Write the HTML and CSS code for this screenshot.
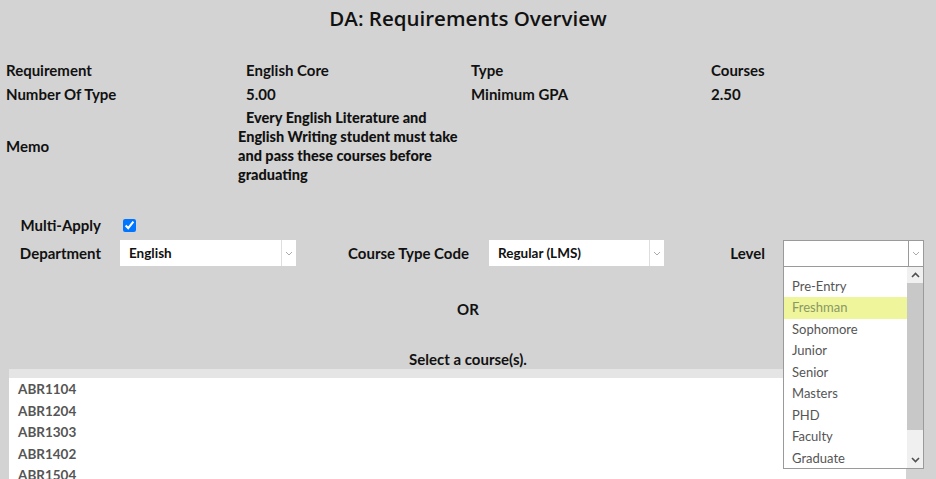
FILE: index.html
```html
<!DOCTYPE html>
<html>
<head>
<meta charset="utf-8">
<link rel="stylesheet" href="styles.css">
</head>
<body>
<h1 class="title">DA: Requirements Overview</h1>

<div class="info">
  <div class="cell">Requirement</div>
  <div class="cell">English Core</div>
  <div class="cell">Type</div>
  <div class="cell">Courses</div>
  <div class="cell">Number Of Type</div>
  <div class="cell">5.00</div>
  <div class="cell">Minimum GPA</div>
  <div class="cell">2.50</div>
  <div class="cell memo-label">Memo</div>
  <div class="cell memo-value">Every English Literature and English Writing student must take and pass these courses before graduating</div>
</div>

<div class="form">
  <div class="frow multi">
    <div class="flabel l1">Multi-Apply</div>
    <input class="check" type="checkbox" checked>
  </div>
  <div class="frow">
    <div class="flabel l1">Department</div>
    <div class="select s1"><span class="sval">English</span><span class="sarrow"><svg width="8" height="5" viewBox="0 0 8 5"><polyline points="1,1 4,4 7,1" fill="none" stroke="#aaa" stroke-width="1"/></svg></span></div>
    <div class="flabel l2">Course Type Code</div>
    <div class="select s2"><span class="sval">Regular (LMS)</span><span class="sarrow"><svg width="8" height="5" viewBox="0 0 8 5"><polyline points="1,1 4,4 7,1" fill="none" stroke="#aaa" stroke-width="1"/></svg></span></div>
    <div class="flabel l3">Level</div>
    <div class="select s3 open"><span class="sval"></span><span class="sarrow"><svg width="8" height="5" viewBox="0 0 8 5"><polyline points="1,1 4,4 7,1" fill="none" stroke="#aaa" stroke-width="1"/></svg></span>
      <div class="dropdown">
        <div class="options">
          <div class="opt">Pre-Entry</div>
          <div class="opt hl">Freshman</div>
          <div class="opt">Sophomore</div>
          <div class="opt">Junior</div>
          <div class="opt">Senior</div>
          <div class="opt">Masters</div>
          <div class="opt">PHD</div>
          <div class="opt">Faculty</div>
          <div class="opt">Graduate</div>
        </div>
        <div class="scrollbar">
          <div class="sb-btn"><svg width="9" height="6" viewBox="0 0 9 6"><polyline points="1,5 4.5,1.5 8,5" fill="none" stroke="#505050" stroke-width="1.6"/></svg></div>
          <div class="sb-thumb"></div>
          <div class="sb-track"></div>
          <div class="sb-btn"><svg width="9" height="6" viewBox="0 0 9 6"><polyline points="1,1 4.5,4.5 8,1" fill="none" stroke="#505050" stroke-width="1.6"/></svg></div>
        </div>
      </div>
    </div>
  </div>
</div>

<div class="or">OR</div>
<div class="select-title">Select a course(s).</div>

<div class="courses">
  <div class="courses-head"></div>
  <div class="course">ABR1104</div>
  <div class="course">ABR1204</div>
  <div class="course">ABR1303</div>
  <div class="course">ABR1402</div>
  <div class="course">ABR1504</div>
</div>
</body>
</html>
```

FILE: styles.css
```css
html, body {
  margin: 0;
  padding: 0;
  height: 479px;
  overflow: hidden;
}
body {
  background: #d3d3d3;
  font-family: Lato, "Noto Sans", sans-serif;
  color: #111;
}
.title {
  margin: 0;
  height: 36px;
  line-height: 36px;
  text-align: center;
  font-family: "Open Sans", "Noto Sans", sans-serif;
  font-weight: 600;
  font-size: 20.5px;
  color: #111;
}
.info {
  margin-top: 22px;
  padding-left: 6px;
  display: grid;
  grid-template-columns: 240px 225px 240px 1fr;
  grid-template-rows: 24px 24px 80px;
  align-items: center;
  font-weight: 700;
  font-size: 15px;
}
.cell {
  line-height: 24px;
  white-space: nowrap;
}
.memo-label {
  grid-row: 3;
  grid-column: 1;
}
.memo-value {
  grid-row: 3;
  grid-column: 2;
  margin-left: -8px;
  width: 232px;
  white-space: normal;
  line-height: 19px;
  font-size: 14.5px;
  font-weight: 900;
  text-indent: 8px;
}
.form {
  margin-top: 29px;
  font-weight: 700;
  font-size: 15px;
}
.frow {
  display: flex;
  align-items: center;
  height: 26px;
}
.frow.multi {
  height: 20px;
  margin-bottom: 5px;
}
.flabel {
  text-align: right;
  white-space: nowrap;
  box-sizing: border-box;
}
.l1 { width: 120px; padding-right: 19px; }
.l2 { width: 193px; padding-right: 20px; }
.l3 { width: 119px; padding-right: 18px; }
.check {
  margin: 0 0 0 3px;
  width: 13px;
  height: 13px;
}
.select {
  position: relative;
  height: 26px;
  background: #fff;
  display: flex;
  align-items: center;
  box-sizing: border-box;
  font-size: 13.5px;
  font-weight: 700;
  color: #111;
}
.sval {
  flex: 1;
  padding-left: 9px;
  line-height: 26px;
}
.sarrow {
  width: 14px;
  height: 100%;
  border-left: 1px solid #dedede;
  display: flex;
  align-items: center;
  justify-content: center;
}
.s1 { width: 176px; }
.s2 { width: 175px; }
.s3 {
  width: 141px;
  height: 27px;
  border: 1px solid #9a9a9a;
}
.s3 .sarrow {
  width: 14px;
  border-left: 1px solid #9a9a9a;
}
.dropdown {
  position: absolute;
  left: -1px;
  top: 25px;
  width: 141px;
  height: 203px;
  border: 1px solid #9a9a9a;
  background: #fff;
  display: flex;
  box-sizing: border-box;
  z-index: 5;
}
.options {
  flex: 1;
  padding-top: 9px;
}
.opt {
  height: 21.5px;
  line-height: 21.5px;
  padding-left: 8px;
  font-size: 13px;
  font-weight: 400;
  color: #555;
}
.opt.hl {
  background: #eef59b;
  color: #8a9866;
}
.scrollbar {
  width: 16px;
  display: flex;
  flex-direction: column;
  background: #f0f0f0;
}
.sb-btn {
  height: 16px;
  display: flex;
  align-items: center;
  justify-content: center;
  background: #f0f0f0;
}
.sb-thumb {
  height: 147px;
  background: #c8c8c8;
}
.sb-track {
  flex: 1;
  background: #f0f0f0;
}
.or {
  margin-top: 33px;
  height: 20px;
  line-height: 20px;
  text-align: center;
  font-weight: 700;
  font-size: 15px;
}
.select-title {
  margin-top: 30px;
  height: 20px;
  line-height: 20px;
  text-align: center;
  font-weight: 700;
  font-size: 15px;
}
.courses {
  margin-left: 9px;
  width: 897px;
  height: 200px;
  background: #fff;
}
.courses-head {
  height: 9px;
  background: #e5e5e5;
  margin-bottom: 1px;
}
.course {
  height: 21.5px;
  line-height: 21.5px;
  padding-left: 9px;
  font-size: 13.5px;
  font-weight: 700;
  color: #555;
}
```
